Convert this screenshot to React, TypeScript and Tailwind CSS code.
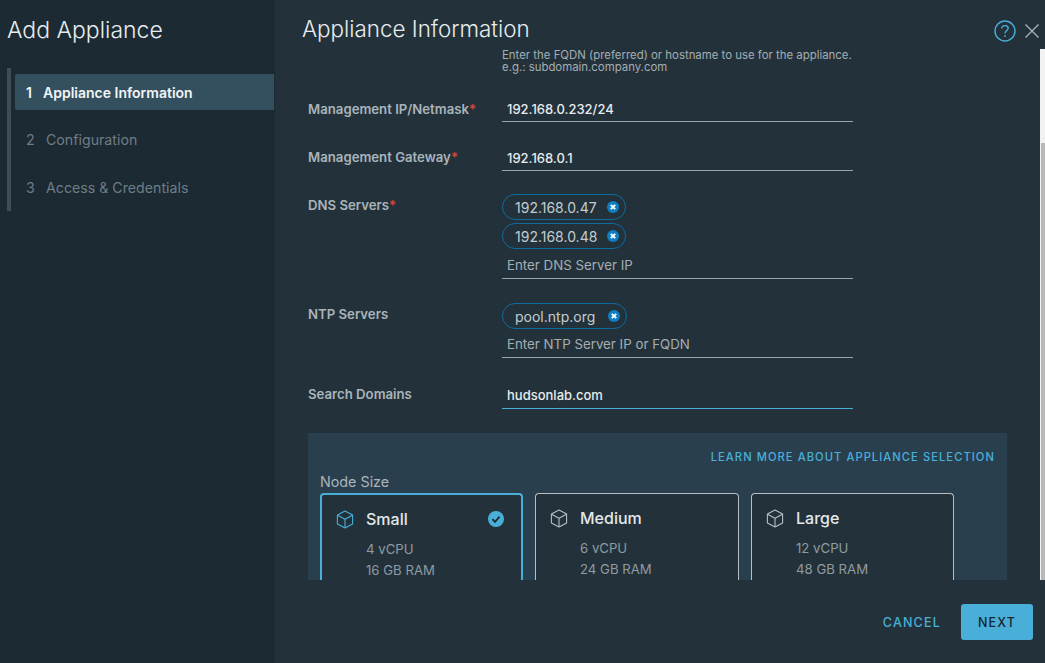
const fontStack = { fontFamily: "Inter, 'Noto Sans', sans-serif" };

function CubeIcon({ className }: { className: string }) {
  return (
    <svg viewBox="0 0 18 19" fill="none" stroke="currentColor" strokeWidth="1.1" className={className}>
      <path d="M9 1 L16.6 5 V14 L9 18 L1.4 14 V5 Z" strokeLinejoin="round" />
      <path d="M1.6 5.2 L9 9.2 L16.4 5.2 M9 9.2 V17.8" strokeLinejoin="round" />
    </svg>
  );
}

function CheckBadge() {
  return (
    <svg viewBox="0 0 16 16" className="w-[16px] h-[16px]">
      <circle cx="8" cy="8" r="8" fill="#49afd9" />
      <path d="M4.4 8.2 L7 10.8 L11.6 5.6" fill="none" stroke="#1f2d35" strokeWidth="1.9" />
    </svg>
  );
}

function Chip({ text, wide }: { text: string; wide?: boolean }) {
  return (
    <div className={`flex items-center h-[26px] border border-[#0f6a9e] rounded-full pl-[12px] text-[14px] text-[#c3ccd1] ${wide ? "w-[125px]" : "w-[124px]"}`}>
      <span className="flex-1 truncate">{text}</span>
      <svg viewBox="0 0 12 12" className="w-[12px] h-[12px] mr-[6px] shrink-0">
        <circle cx="6" cy="6" r="6" fill="#0f7fc4" />
        <path d="M3.8 3.8 L8.2 8.2 M8.2 3.8 L3.8 8.2" stroke="#fff" strokeWidth="1.9" />
      </svg>
    </div>
  );
}

function Label({ text, required }: { text: string; required?: boolean }) {
  return (
    <div className="w-[194px] shrink-0 text-[13.2px] font-semibold text-[#a9b4ba] leading-[16px]">
      {text}
      {required && <span className="text-[#d8453c]">*</span>}
    </div>
  );
}

function TextLine({ text, focused, className }: { text: string; focused?: boolean; className: string }) {
  return (
    <div
      className={`w-[351px] pl-[5px] text-[13px] font-medium text-[#e6ebee] border-b ${
        focused ? "border-[#49afd9]" : "border-[#9aa5ab]"
      } ${className}`}
    >
      {text}
    </div>
  );
}

function Placeholder({ text, className }: { text: string; className: string }) {
  return (
    <div className={`w-[351px] pl-[5px] text-[13.3px] text-[#a3aeb4] border-b border-[#9aa5ab] ${className}`}>{text}</div>
  );
}

function SizeCard({ name, cpu, ram, selected, className }: { name: string; cpu: string; ram: string; selected?: boolean; className: string }) {
  return (
    <div
      className={`h-[100px] rounded-t-[4px] border-x border-t bg-[#23323a] pl-[14px] pr-[17px] pt-[13px] ${className} ${
        selected ? "border-[#49afd9] border-x-2 border-t-2" : "border-[#b6bec3]"
      }`}
    >
      <div className="flex items-center h-[22px]">
        <CubeIcon className={`w-[18px] h-[19px] shrink-0 ${selected ? "text-[#49afd9]" : "text-[#b6bec3]"}`} />
        <span className="ml-[12px] flex-1 text-[16px] font-medium text-[#e3e8eb]">{name}</span>
        {selected && <CheckBadge />}
      </div>
      <div className="ml-[30px] mt-[9px] text-[13.2px] leading-[21px] text-[#8f9ba2]">
        <div>{cpu}</div>
        <div>{ram}</div>
      </div>
    </div>
  );
}

export default function App() {
  return (
    <div className="flex w-[1045px] h-[663px] overflow-hidden bg-[#23323a]" style={fontStack}>
      <aside className="w-[275px] shrink-0 bg-[#1b2a33] pl-[7px] pr-[1px]">
        <h1 className="pt-[15px] h-[68px] text-[23px] leading-[30px] font-light text-[#e8ecee]">Add Appliance</h1>
        <div className="flex h-[143px] border-l-4 border-[#3e4e57]">
          <div className="flex-1 pl-[4px] pt-[6px]">
            <div className="flex items-center h-[36px] bg-[#34505f] rounded-l-[2px] pl-[11px] text-[14px] font-semibold text-[#f2f5f6]">
              <span className="w-[17px]">1</span>Appliance Information
            </div>
            <div className="flex items-center h-[47px] mt-[6px] pl-[11px] text-[14.2px] text-[#6f7d85]">
              <span className="w-[20px]">2</span>Configuration
            </div>
            <div className="flex items-center h-[47px] mt-[1px] pl-[11px] text-[14.2px] text-[#6f7d85]">
              <span className="w-[20px]">3</span>Access &amp; Credentials
            </div>
          </div>
        </div>
      </aside>

      <main className="flex-1 flex flex-col min-w-0">
        <header className="flex items-start h-[49px] shrink-0 pl-[27px] pr-[6px]">
          <h2 className="flex-1 pt-[14px] text-[22.4px] leading-[30px] font-light text-[#e8ecee]">Appliance Information</h2>
          <svg viewBox="0 0 22 22" className="w-[22px] h-[22px] mt-[20px] text-[#49afd9]" fill="none" stroke="currentColor">
            <circle cx="11" cy="11" r="10" strokeWidth="1.4" />
            <path d="M7.8 8.4 C7.8 6.6 9.2 5.6 11 5.6 C12.8 5.6 14.2 6.7 14.2 8.3 C14.2 10.4 11 10.6 11 13.4" strokeWidth="1.4" />
            <circle cx="11" cy="16" r="0.9" fill="currentColor" stroke="none" />
          </svg>
          <svg viewBox="0 0 14 14" className="w-[14px] h-[14px] mt-[24px] ml-[9px] text-[#a9b4ba]" fill="none" stroke="currentColor" strokeWidth="1.3">
            <path d="M0.5 0.5 L13.5 13.5 M13.5 0.5 L0.5 13.5" />
          </svg>
        </header>

        <div className="flex h-[531px] shrink-0">
          <div className="flex-1 min-w-0 overflow-hidden pl-[33px] pr-[33px]">
            <p className="ml-[194px] text-[11.4px] leading-[12px] text-[#a3aeb4]">
              Enter the FQDN (preferred) or hostname to use for the appliance.
              <br />
              e.g.: subdomain.company.com
            </p>

            <div className="flex mt-[25px]">
              <div className="pt-[3px]"><Label text="Management IP/Netmask" required /></div>
              <TextLine text="192.168.0.232/24" className="h-[24px] leading-[23px]" />
            </div>
            <div className="flex mt-[25px]">
              <div className="pt-[2px]"><Label text="Management Gateway" required /></div>
              <TextLine text="192.168.0.1" className="h-[24px] leading-[22px]" />
            </div>

            <div className="flex mt-[23px]">
              <div className="pt-[3px]"><Label text="DNS Servers" required /></div>
              <div className="flex flex-col gap-[3px]">
                <Chip text="192.168.0.47" />
                <Chip text="192.168.0.48" />
                <Placeholder text="Enter DNS Server IP" className="h-[27px] leading-[26px]" />
              </div>
            </div>

            <div className="flex mt-[24px]">
              <div className="pt-[3px]"><Label text="NTP Servers" /></div>
              <div className="flex flex-col gap-[3px]">
                <Chip text="pool.ntp.org" wide />
                <Placeholder text="Enter NTP Server IP or FQDN" className="h-[26px] leading-[25px]" />
              </div>
            </div>

            <div className="flex mt-[27px]">
              <div className="pt-[1px]"><Label text="Search Domains" /></div>
              <TextLine text="hudsonlab.com" focused className="h-[24px] leading-[21px]" />
            </div>

            <section className="mt-[24px] h-[200px] w-[699px] bg-[#2a3f4e] px-[12px] pt-[17px]">
              <div className="text-right text-[11.2px] leading-[14px] font-medium tracking-[1.05px] text-[#49afd9]">
                LEARN MORE ABOUT APPLIANCE SELECTION
              </div>
              <div className="mt-[8px] h-[21px] text-[14.3px] leading-[20px] text-[#a9b4ba]">Node Size</div>
              <div className="flex gap-[12px] items-start">
                <SizeCard name="Small" cpu="4 vCPU" ram="16 GB RAM" selected className="w-[203px]" />
                <SizeCard name="Medium" cpu="6 vCPU" ram="24 GB RAM" className="w-[204px]" />
                <SizeCard name="Large" cpu="12 vCPU" ram="48 GB RAM" className="w-[203px]" />
              </div>
            </section>
          </div>

          <div className="w-[5px] shrink-0 bg-[#f2f2f2] flex flex-col">
            <div className="h-[94px]" />
            <div className="flex-1 ml-[1px] bg-[#b9b9b9]" />
          </div>
        </div>

        <footer className="flex-1 flex items-start justify-end pt-[24px] pr-[12px]">
          <button className="h-[36px] pt-[3px] px-[12px] mr-[8px] text-[12.5px] font-medium tracking-[1.2px] text-[#49afd9]">CANCEL</button>
          <button className="w-[72px] h-[36px] pt-[3px] rounded-[3px] bg-[#49afd9] text-[12.5px] font-medium tracking-[1.2px] text-[#16262e]">NEXT</button>
        </footer>
      </main>
    </div>
  );
}
